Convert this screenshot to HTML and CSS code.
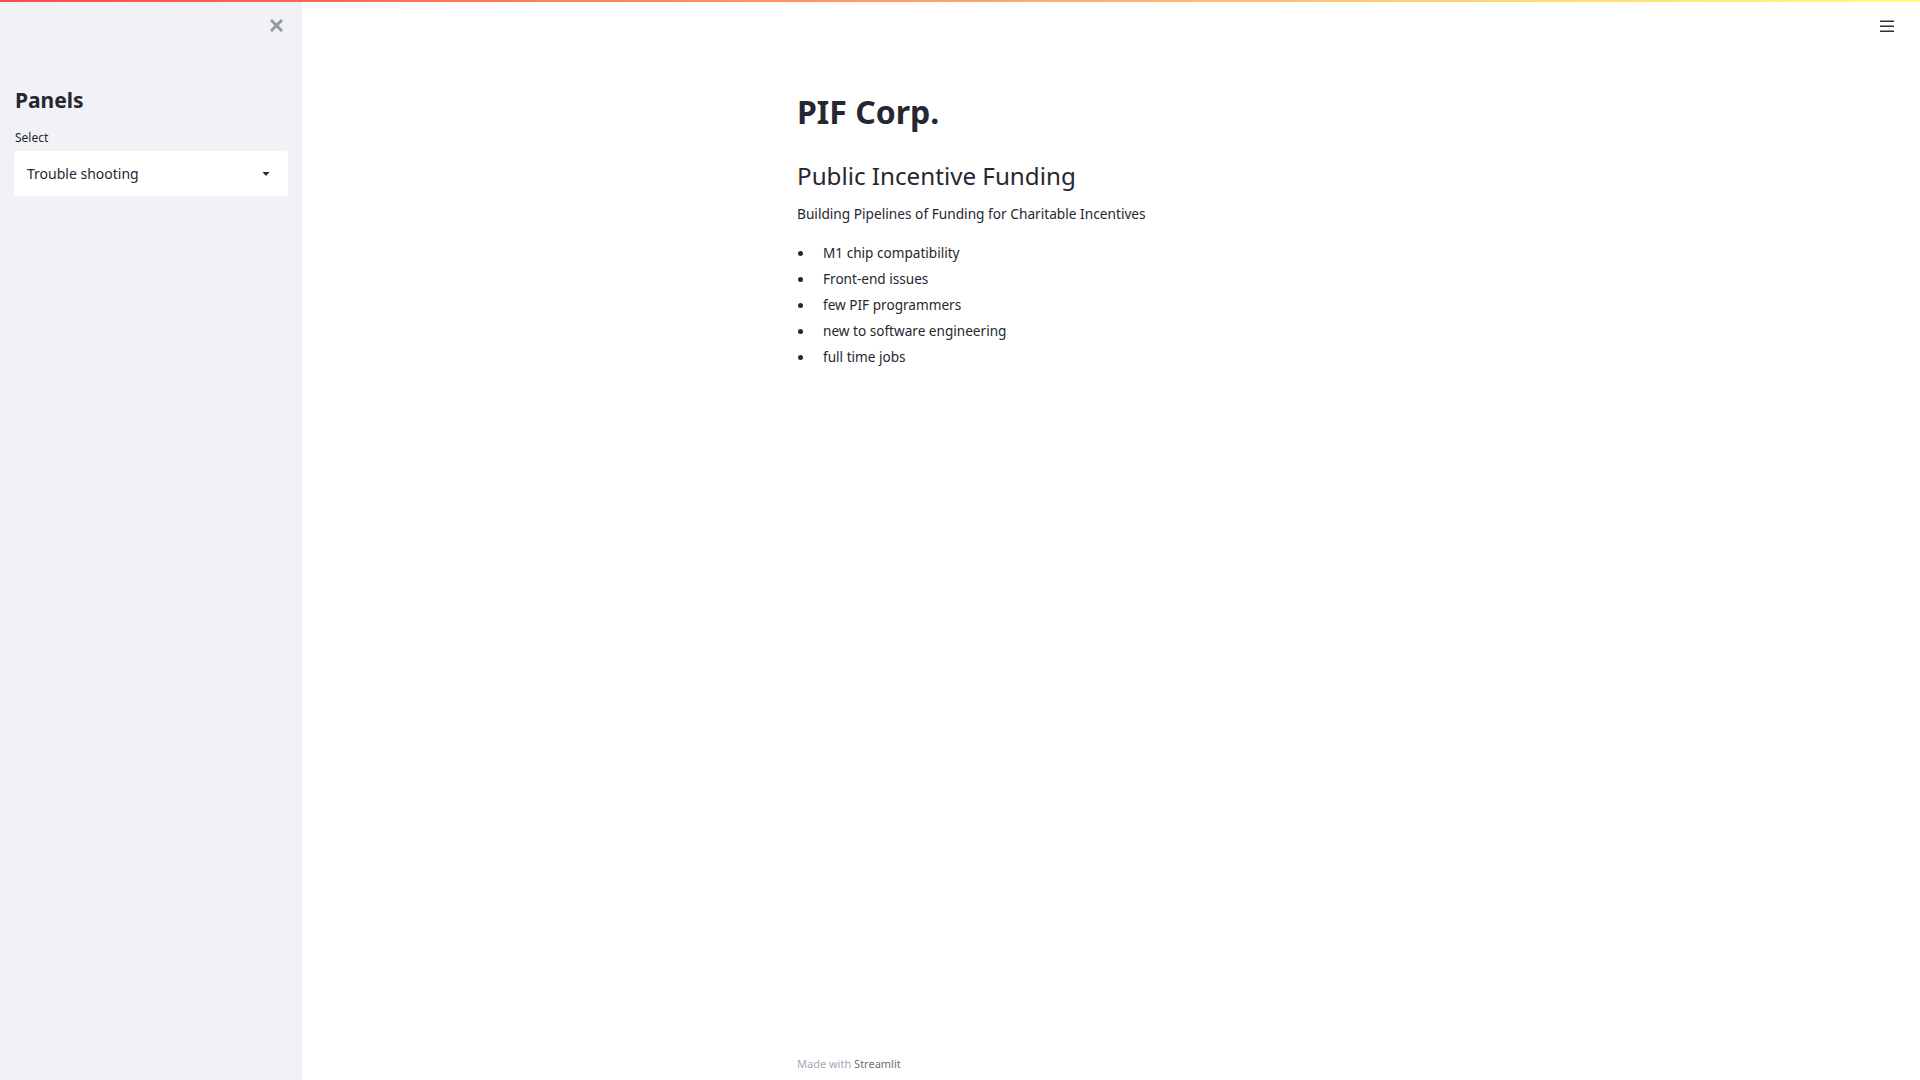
FILE: index.html
```html
<!DOCTYPE html>
<html lang="en">
<head>
<meta charset="utf-8">
<title>PIF Corp.</title>
<link rel="stylesheet" href="styles.css">
</head>
<body>
<div class="decoration"></div>
<div class="app">
  <aside class="sidebar">
    <div class="sidebar-top">
      <button class="close-btn" aria-label="Close sidebar">
        <svg width="13" height="13" viewBox="0 0 13 13"><path d="M2 2 L11 11 M11 2 L2 11" stroke="#979aa1" stroke-width="3" stroke-linecap="square"/></svg>
      </button>
    </div>
    <h2 class="side-title">Panels</h2>
    <label class="side-label">Select</label>
    <div class="selectbox">
      <span class="select-value">Trouble shooting</span>
      <svg class="select-arrow" width="8" height="4" viewBox="0 0 8 4"><path d="M0.5 0 L7.5 0 L4 4 Z" fill="#262730"/></svg>
    </div>
  </aside>
  <main class="main">
    <div class="topbar">
      <button class="menu-btn" aria-label="Menu">
        <svg width="14" height="12" viewBox="0 0 14 12"><path d="M0 1.25 H14 M0 6.25 H14 M0 11.25 H14" stroke="#31333f" stroke-width="1.6"/></svg>
      </button>
    </div>
    <div class="block">
      <h1 class="title">PIF Corp.</h1>
      <h3 class="subtitle">Public Incentive Funding</h3>
      <p class="lead">Building Pipelines of Funding for Charitable Incentives</p>
      <ul class="list">
        <li>M1 chip compatibility</li>
        <li>Front-end issues</li>
        <li>few PIF programmers</li>
        <li>new to software engineering</li>
        <li>full time jobs</li>
      </ul>
    </div>
    <footer class="footer">
      <span class="footer-text">Made with <span class="footer-brand">Streamlit</span></span>
    </footer>
  </main>
</div>
</body>
</html>
```
FILE: styles.css
```css
* { box-sizing: border-box; }
html, body {
  margin: 0;
  padding: 0;
  height: 100%;
}
body {
  font-family: "Noto Sans", "Open Sans", sans-serif;
  color: #262730;
  background: #ffffff;
  position: relative;
  overflow: hidden;
}
.decoration {
  position: absolute;
  top: 0;
  left: 0;
  right: 0;
  height: 2px;
  background: linear-gradient(90deg, #ff4b4b, #fffd80);
  z-index: 10;
}
.app {
  display: flex;
  height: 100vh;
}
.sidebar {
  width: 302px;
  flex: none;
  background: #f0f2f6;
  padding: 0 14px 0 14px;
  display: flex;
  flex-direction: column;
}
.sidebar-top {
  display: flex;
  justify-content: flex-end;
  padding-top: 19px;
  padding-right: 5px;
  height: 85px;
}
.close-btn, .menu-btn {
  border: 0;
  background: none;
  padding: 0;
  margin: 0;
  width: 13px;
  height: 13px;
  display: flex;
  cursor: pointer;
}
.menu-btn { width: 14px; height: 12px; }
.side-title {
  margin: 0;
  font-size: 21px;
  font-weight: 700;
  line-height: 30px;
  padding-left: 1px;
}
.side-label {
  display: block;
  font-size: 12px;
  line-height: 16px;
  margin-top: 15px;
  padding-left: 1px;
}
.selectbox {
  margin-top: 5px;
  height: 45px;
  width: 274px;
  background: #ffffff;
  border-radius: 4px;
  display: flex;
  align-items: center;
  justify-content: space-between;
  padding: 0 18px 0 13px;
}
.select-value {
  font-size: 14px;
}
.main {
  flex: 1;
  display: flex;
  flex-direction: column;
  min-width: 0;
}
.topbar {
  display: flex;
  justify-content: flex-end;
  padding: 20px 26px 0 0;
  height: 32px;
}
.block {
  width: 628px;
  margin: 0 auto;
  padding-top: 60px;
}
.title {
  margin: 0;
  font-size: 32px;
  font-weight: 700;
  line-height: 40px;
}
.subtitle {
  margin: 28px 0 0 0;
  font-size: 24.2px;
  font-weight: 400;
  line-height: 32px;
}
.lead {
  margin: 11px 0 0 0;
  font-size: 13.7px;
  line-height: 22px;
}
.list {
  margin: 15px 0 0 0;
  padding: 0;
  list-style: none;
  font-size: 13.6px;
  line-height: 26px;
}
.list li {
  display: flex;
  align-items: center;
}
.list li::before {
  content: "";
  width: 5px;
  height: 5px;
  border-radius: 50%;
  background: #262730;
  margin: 0 20px 0 1px;
  flex: none;
}
.footer {
  margin-top: auto;
  width: 628px;
  margin-left: auto;
  margin-right: auto;
  padding-bottom: 7px;
}
.footer-text {
  font-size: 11px;
  line-height: 16px;
  color: #a3a8b8;
}
.footer-brand {
  color: #6b6f7b;
}
```
